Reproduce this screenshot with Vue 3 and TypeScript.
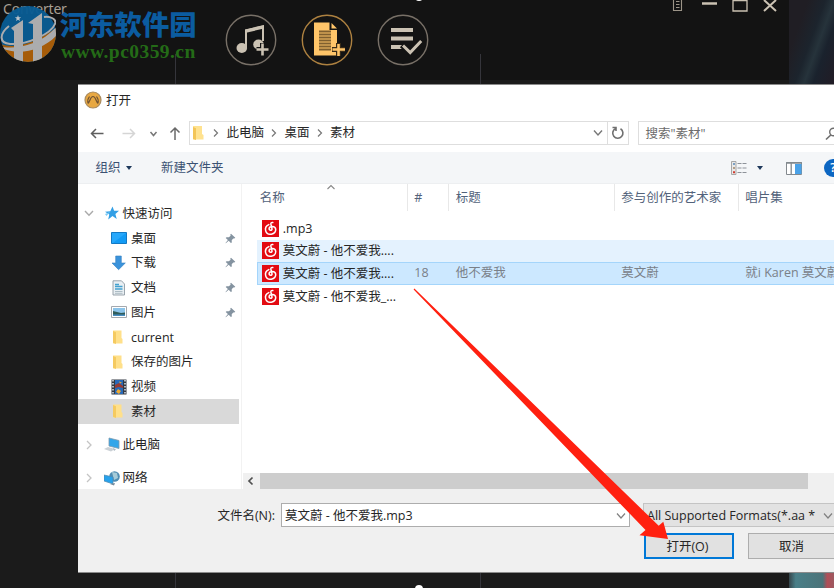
<script setup lang="ts">
interface Place { label: string; icon: string; pinned?: boolean; selected?: boolean }
interface Track { name: string; no?: string; title?: string; artist?: string; album?: string; state?: string }

const places: Place[] = [
  { label: '桌面', icon: 'desktop', pinned: true },
  { label: '下载', icon: 'download', pinned: true },
  { label: '文档', icon: 'doc', pinned: true },
  { label: '图片', icon: 'picture', pinned: true },
  { label: 'current', icon: 'folder' },
  { label: '保存的图片', icon: 'folder' },
  { label: '视频', icon: 'video' },
  { label: '素材', icon: 'folder', selected: true },
]
const tracks: Track[] = [
  { name: '.mp3' },
  { name: '莫文蔚 - 他不爱我....', state: 'hover' },
  { name: '莫文蔚 - 他不爱我....', no: '18', title: '他不爱我', artist: '莫文蔚', album: '就i Karen 莫文蔚', state: 'active' },
  { name: '莫文蔚 - 他不爱我_...' },
]
const crumbs: string[] = ['此电脑', '桌面', '素材']
</script>

<template>
  <div class="screen">
    <header class="app-bar">
      <div class="app-name">Converter</div>
      <div class="tools">
        <svg class="tool" viewBox="0 0 52 52">
          <circle cx="26" cy="26" r="24.700" fill="none" stroke="#787067" stroke-width="1.400" />
          <path d="M21 34V16.500l17-4V27" fill="none" stroke="#cbc2b3" stroke-width="2" />
          <path d="M20 15.500l19-4.500v3.500l-19 4.500z" fill="#cbc2b3" />
          <ellipse cx="16.800" cy="34" rx="5.300" ry="5" fill="#cbc2b3" />
          <ellipse cx="33.500" cy="30.500" rx="5.300" ry="5" fill="#cbc2b3" />
          <path d="M37.500 29v13M31.500 35.500h12.500" stroke="#131313" stroke-width="5" />
          <path d="M37.500 29.500v12M31.500 35.500h12" stroke="#cbc2b3" stroke-width="2.600" />
        </svg>
        <svg class="tool" viewBox="0 0 52 52">
          <circle cx="26" cy="26" r="24.700" fill="none" stroke="#ad8140" stroke-width="1.400" />
          <path d="M13 8.500h15.500v7.500h7.500v25.500H13z" fill="#ffc569" />
          <path d="M30.500 9v5.500H36z" fill="#ffc569" />
          <path d="M18 17.500h12M18 20.500h12M18 23.500h12M18 26.500h12M18 29.500h12M18 32.500h12M18 35.500h12" stroke="#80602f" stroke-width="1.800" />
          <path d="M37.500 29v13M31 35.500h13" stroke="#382b17" stroke-width="5" />
          <path d="M37.500 30v12M31.500 35.500h12.500" stroke="#ffc569" stroke-width="2.600" />
        </svg>
        <svg class="tool" viewBox="0 0 52 52">
          <circle cx="26" cy="26" r="24.700" fill="none" stroke="#787067" stroke-width="1.400" />
          <path d="M14 16h22M14 24.500h22M14 33h12" stroke="#cbc2b3" stroke-width="4.200" />
          <path d="M25 31l8 7.500 11.500-12" fill="none" stroke="#131313" stroke-width="6" />
          <path d="M26 31.500l7.200 7 11-11.500" fill="none" stroke="#cbc2b3" stroke-width="3" />
        </svg>
      </div>
      <svg class="win-controls" viewBox="0 0 114 14">
        <path d="M2.500 0v10.500h8V0M5 1.500h3.500M5 4.500h3.500M5 7.500h3.500" fill="none" stroke="#9c9488" stroke-width="1.100" />
        <path d="M31 3.500h15" stroke="#cbc2b3" stroke-width="2.500" />
        <path d="M62 .5h14v10.500H62zM62 0h14" fill="none" stroke="#cbc2b3" stroke-width="1.300" />
        <path d="M93 0l12 11M105 0L93 11" stroke="#cbc2b3" stroke-width="2" />
      </svg>
    </header>
    <div class="guide guide-left"></div>
    <div class="guide guide-right"></div>
    <div class="wall wall-top"></div>
    <div class="wall wall-bottom"></div>

    <div class="watermark">
      <svg class="mark" viewBox="0 0 56 56">
        <defs><clipPath id="disc"><circle cx="28" cy="28" r="28" /></clipPath></defs>
        <g clip-path="url(#disc)">
          <rect width="56" height="56" fill="#095c94" />
          <path d="M0 38C18 44 38 35 56 22v34H0z" fill="#ad6009" />
          <path d="M11 22l12-8v42h-9V25zM28 17l14-10v49h-9V18z" fill="#b2b3b5" />
          <path d="M-2 38C3 45 38 43 57 20v9C42 45 18 50 2 42z" fill="#b2b3b5" />
        </g>
        <path d="M9 20C-1 28-1 37 10 38c17 1 41-10 45-20 2-5-5-8-11-7" fill="none" stroke="#b2b3b5" stroke-width="2" />
        <path d="M18 9l.8 2.200h2.300l-1.800 1.500.7 2.300-2-1.300-2 1.300.7-2.300-1.800-1.500h2.300z" fill="#c4cbd2" />
      </svg>
      <div class="mark-text">
        <div class="mark-cn">河东软件园</div>
        <div class="mark-url">www.pc0359.cn</div>
      </div>
    </div>

    <section class="dialog">
      <div class="title">
        <svg class="logo" viewBox="0 0 18 18">
          <circle cx="9" cy="9" r="8" fill="#e8a842" stroke="#a98b60" stroke-width="1.200" />
          <path d="M3.800 12.500C6 11.500 6 5.500 9 5.500s3 6 5.200 7M5.500 5.500C3.500 8 3.500 10 4 12M12.500 5.500c2 2.500 2 4.500 1.500 6.500" fill="none" stroke="#705333" stroke-width="1.200" />
        </svg>
        <span>打开</span>
      </div>

      <div class="nav">
        <svg class="arrows" viewBox="0 0 102 24">
          <g fill="none" stroke-width="1.500">
            <path d="M13.500 12.500H1.500M6 8l-4.500 4.500L6 17" stroke="#5f5f5f" />
            <path d="M32.500 12.500H44.500M40 8l4.500 4.500L40 17" stroke="#d5d5d5" />
            <path d="M60.500 11l3 3.500 3-3.500" stroke="#777" />
            <path d="M85 19V7M80.500 11.500L85 7l4.500 4.500" stroke="#6a6a6a" />
          </g>
        </svg>
        <div class="address">
          <svg class="folder small" viewBox="0 0 12 14"><path d="M1 0h9v8l1.500 1v4.500H1z" fill="#ffe28f" /><path d="M1 1l3 1.200V14l-3-1z" fill="#f3c557" /></svg>
          <template v-for="c in crumbs" :key="c">
            <svg class="sep" viewBox="0 0 8 10"><path d="M2 1.500L5.500 5 2 8.500" fill="none" stroke="#777" stroke-width="1.200" /></svg>
            <span class="crumb">{{ c }}</span>
          </template>
          <svg class="chev" viewBox="0 0 10 8"><path d="M1 1.500L5 6l4-4.500" fill="none" stroke="#777" stroke-width="1.400" /></svg>
          <div class="refresh">
            <svg viewBox="0 0 14 14"><path d="M9.500 2.800A5.100 5.100 0 1 1 4.500 2.600M1.500 1.500H5V5" fill="none" stroke="#707070" stroke-width="1.600" /></svg>
          </div>
        </div>
        <div class="search">
          <span>搜索"素材"</span>
          <svg viewBox="0 0 14 14"><circle cx="8.500" cy="5" r="3.800" fill="none" stroke="#6e6e6e" stroke-width="1.400" /><path d="M5.800 8L1 12.500" stroke="#6e6e6e" stroke-width="1.600" /></svg>
        </div>
      </div>

      <div class="toolbar">
        <span>组织</span><i class="caret"></i>
        <span class="new-folder">新建文件夹</span>
        <div class="view-icons">
          <svg class="view-list" viewBox="0 0 16 14">
            <path d="M.5.500h4.500v13H.5z" fill="#e9e9e9" stroke="#a7a7a7" />
            <path d="M2 3h2" stroke="#5689b8" stroke-width="1.500" /><path d="M2 7h2" stroke="#a08364" stroke-width="1.500" /><path d="M2 11.300h2" stroke="#d23b2f" stroke-width="2" />
            <path d="M6.500 2.500h4M11.500 2.500h4M6.500 7h4M11.500 7h4M6.500 11.500h4M11.500 11.500h4" stroke="#8d9299" stroke-width="1.200" />
          </svg>
          <i class="caret view-caret"></i>
          <svg class="view-pane" viewBox="0 0 16 13"><path d="M.5.500h15v12H.5z" fill="#fff" stroke="#83898e" /><path d="M0 1h16M5.200 1v11" stroke="#83898e" stroke-width="1.300" /><path d="M9 2h6.500v10H9z" fill="#4aa2e8" /></svg>
          <span class="help">?</span>
        </div>
      </div>

      <div class="content">
        <aside class="sidebar">
          <div class="place root">
            <svg class="twist" viewBox="0 0 10 10"><path d="M1 3l4 4.200L9 3" fill="none" stroke="#aaa" stroke-width="1.400" /></svg>
            <svg class="root-icon" viewBox="0 0 16 16"><path d="M8.500 1.500l1.600 4.300h4.900l-3.600 3.100 1.300 5.100-4.200-2.900-4.300 3.400 1.100-5L1 6.800l5.300-.5z" fill="#329fe5" /><path d="M1 9l5-2-3.500 4z" fill="#80ccf5" /></svg>
            <span>快速访问</span>
          </div>
          <div v-for="p in places" :key="p.label" class="place child" :class="{ selected: p.selected }">
            <span class="icon-slot">
              <svg v-if="p.icon === 'desktop'" width="16" height="14" viewBox="0 0 16 14"><path d="M.5 1.500h15v11H.5z" fill="#139bf5" stroke="#1379c4" /><path d="M1 2h14L2 12H1z" fill="#35b1ff" opacity=".6" /></svg>
              <svg v-else-if="p.icon === 'download'" width="16" height="16" viewBox="0 0 16 16"><path d="M4.700 1h5.600v7h4L7.600 14.700 1 8h3.700z" fill="#3b93db" stroke="#347fc1" stroke-width=".6" /></svg>
              <svg v-else-if="p.icon === 'doc'" width="16" height="16" viewBox="0 0 16 16"><path d="M2 .8h8.500L13.500 4v11H2z" fill="#e9eff3" stroke="#909ba4" stroke-width=".9" /><path d="M4 4.500h4M4 6.500h7.500M4 9h7.500" stroke="#43a1cf" stroke-width="1.500" /><path d="M4 11.500h7.500M4 13.300h7.500" stroke="#9dafb8" stroke-width=".8" /></svg>
              <svg v-else-if="p.icon === 'picture'" width="16" height="14" viewBox="0 0 16 14"><path d="M.5 1.500h15v11H.5z" fill="#fff" stroke="#a4a9af" /><path d="M2 3h12v8H2z" fill="#8cc4ea" /><path d="M2 6l4 1 4 1 4-.5V11H2z" fill="#315d5b" /><path d="M2 9.500h12V11H2z" fill="#478dc1" /></svg>
              <svg v-else-if="p.icon === 'video'" width="16" height="16" viewBox="0 0 16 16"><path d="M.5.500h15v15H.5z" fill="#333943" /><path d="M4 1h8v14H4z" fill="#286ab9" /><path d="M4 6l4-2 4 3v2l-4-1-4 1z" fill="#9a3b32" /><path d="M8 2.500l3 1-2 1zM7 10l3 2-2 3-3-2z" fill="#f0aa31" /><path d="M2 1v14M14 1v14" stroke="#d3d9df" stroke-width="1.600" stroke-dasharray="1.500 1.500" /></svg>
              <svg v-else width="16" height="16" viewBox="0 0 16 16"><path d="M2 1.500h8.500V9l1 1v4.500H2z" fill="#ffe08a" /><path d="M2 2l3 1.200V15l-3-1.200z" fill="#f5ca60" /></svg>
            </span>
            <span>{{ p.label }}</span>
            <svg v-if="p.pinned" class="pin" viewBox="0 0 11 11"><path d="M6 .8l4.300 4-1 .8-1-.2-1.600 1.800.1 2.300-.9.500L3.700 7.800.8 10.300.5 10l2.400-3L.7 5l.8-.8 2.400.1 1.700-1.600-.3-1.200z" fill="#8493a0" /></svg>
          </div>
          <div class="place root gap">
            <svg class="twist" viewBox="0 0 10 10"><path d="M3 1l4 4-4 4" fill="none" stroke="#c4c4c4" stroke-width="1.300" /></svg>
            <svg class="root-icon" viewBox="0 0 16 16"><path d="M5 1l10 2.500v8L5 9z" fill="#32a6ea" stroke="#7e9bad" stroke-width=".8" /><path d="M0 12l4-2 7 2-4 2.500z" fill="#cbd1d6" /><path d="M9 11l3 1.500-2 1.500" fill="#aab7c0" /></svg>
            <span>此电脑</span>
          </div>
          <div class="place root gap">
            <svg class="twist" viewBox="0 0 10 10"><path d="M3 1l4 4-4 4" fill="none" stroke="#c4c4c4" stroke-width="1.300" /></svg>
            <svg class="root-icon" viewBox="0 0 16 16"><circle cx="10.500" cy="6.500" r="5.300" fill="#508db2" /><path d="M8 2l5 1 1 5-4 2z" fill="#a6cbd8" /><path d="M0 5l9 2v7L0 11z" fill="#27a2ec" stroke="#5188ac" stroke-width=".7" /><path d="M6 14l5-1-1 2.500z" fill="#74899a" /></svg>
            <span>网络</span>
          </div>
        </aside>

        <main class="files">
          <div class="cols head">
            <span class="c-name">名称</span><span>#</span><span>标题</span><span>参与创作的艺术家</span><span>唱片集</span>
            <svg class="sort" viewBox="0 0 10 6"><path d="M1.500 5L5 1.500 8.500 5" fill="none" stroke="#888" stroke-width="1.100" /></svg>
          </div>
          <div v-for="(t, i) in tracks" :key="i" class="cols track" :class="t.state">
            <span class="c-name">
              <svg class="disc" viewBox="0 0 17 17"><rect width="17" height="17" fill="#e30b12" /><path d="M10.800 2.500C9.500 2.200 8.600 3 8.900 4.300l1.100 4.600c.3 1.500-2.900 2-2.900-.1 0-3 6.300-3.500 6.600.5.300 5.600-8.600 6.900-10 1.600-.8-3 1-5.400 3.100-6.300" fill="none" stroke="#fff" stroke-width="1.500" stroke-linecap="round" /></svg>
              <span>{{ t.name }}</span>
            </span>
            <span>{{ t.no }}</span><span>{{ t.title }}</span><span>{{ t.artist }}</span><span>{{ t.album }}</span>
          </div>
          <div class="scroll">
            <svg viewBox="0 0 17 16"><path d="M9.500 4.500L6 8l3.500 3.500" fill="none" stroke="#505050" stroke-width="1.700" /></svg>
            <div class="thumb"></div>
          </div>
        </main>
      </div>

      <footer class="footer">
        <div class="line">
          <label>文件名(N):</label>
          <div class="field"><span>莫文蔚 - 他不爱我.mp3</span><svg class="chev" viewBox="0 0 10 8"><path d="M1 1.500L5 6l4-4.500" fill="none" stroke="#808080" stroke-width="1.200" /></svg></div>
          <div class="filter"><span>All Supported Formats(*.aa *</span><svg class="chev" viewBox="0 0 10 8"><path d="M1 1.500L5 6l4-4.500" fill="none" stroke="#808080" stroke-width="1.200" /></svg></div>
        </div>
        <div class="line buttons">
          <button class="btn primary">打开(O)</button>
          <button class="btn">取消</button>
        </div>
      </footer>
    </section>

    <svg class="pointer" viewBox="0 0 834 588"><path d="M413.600 289.400l.8-1 244.300 237.300 4.600-4 4.700 17.300-28.500-3.700 6-5.300z" fill="#ff2010" /></svg>
    <i class="handle handle-top"></i>
    <i class="handle handle-bottom"></i>
  </div>
</template>

<style>
body { margin: 0; overflow: hidden; background: #1b1b1b; }
</style>

<style scoped>
* { box-sizing: border-box; }
svg { display: block; flex: none; }
.screen { position: relative; width: 834px; height: 588px; overflow: hidden; background: #1b1b1b; font: 12.5px/18px "Open Sans", "Noto Sans CJK SC", sans-serif; color: #262626; white-space: nowrap; }
.app-bar { display: flex; height: 80px; width: 789px; background: #131313; }
.app-name { width: 224.500px; padding-left: 3px; font: 14px/17px "Noto Sans", sans-serif; color: #a79f94; letter-spacing: -.2px; }
.tools { display: flex; gap: 24px; padding-top: 13.500px; }
.tool { width: 52px; height: 52px; }
.win-controls { width: 114px; height: 14px; margin-left: auto; margin-right: 4px; }
.guide { position: absolute; top: 54px; width: 1px; height: 534px; background: #35353b; }
.guide-left { left: 175px; }
.guide-right { left: 480px; }
.wall { position: absolute; left: 789px; width: 45px; }
.wall-top { top: 0; height: 84px; background: linear-gradient(110deg, #201e24 0 25%, #1c242d 48%, #26333b 60%, #1a222d 72%, #211c25 100%); }
.wall-bottom { top: 572px; height: 16px; background: linear-gradient(90deg, #35454b, #497f88 15%, #4b7379 75%, #b14e57 85%, #9c5960); }
.watermark { position: absolute; left: 0; top: 6px; display: flex; gap: 4px; opacity: .96; }
.mark { width: 56px; height: 56px; }
.mark-text { padding-top: 2px; }
.mark-cn { font: 900 27.300px/30px "Noto Sans CJK SC", sans-serif; color: #0b5fa6; }
.mark-url { font: bold 19.500px/22px "Liberation Serif", serif; color: #256f18; letter-spacing: .45px; padding-left: 1px; margin-top: 3px; }

.dialog { position: absolute; left: 78px; top: 84px; width: 770px; height: 489px; display: flex; flex-direction: column; border: 1px solid #8b8b8b; border-left: 0; background: #fff; }
.title { display: flex; align-items: center; gap: 4px; height: 36px; padding: 0 0 6px 6px; }
.title span { padding-top: 1px; }
.logo { width: 18px; height: 18px; }
.nav { display: flex; height: 31px; }
.arrows { width: 102px; height: 24px; margin-left: 12px; margin-right: -3.500px; }
.address { display: flex; align-items: center; width: 440px; height: 24px; border: 1px solid #dedede; padding-left: 2.500px; }
.small { width: 12px; height: 14px; margin-right: 8px; }
.sep { width: 8px; height: 10px; }
.crumb { margin: 0 6px 0 6.500px; }
.address .chev { margin-left: auto; margin-right: 4px; }
.chev { width: 10px; height: 8px; }
.refresh { display: flex; align-items: center; justify-content: center; width: 21px; height: 22px; border-left: 1px solid #dedede; }
.refresh svg { width: 14px; height: 14px; }
.search { display: flex; align-items: center; justify-content: space-between; flex: 1; height: 24px; margin-left: 9px; padding: 1px 7px 0 7px; border: 1px solid #dedede; color: #6c6c6c; }
.search svg { width: 14px; height: 14px; }
.toolbar { display: flex; align-items: center; height: 32px; padding: 1px 0 0 17.500px; background: #f4f6f8; border-bottom: 1px solid #edeff1; color: #3b5273; }
.caret { width: 0; height: 0; border: 3.500px solid transparent; border-top: 4px solid #1e395b; border-bottom: 0; margin-left: 5px; }
.new-folder { margin-left: 29.500px; }
.view-icons { display: flex; align-items: center; margin-left: auto; padding-right: 5px; }
.view-list { width: 16px; height: 14px; }
.view-caret { margin-left: 10.500px; }
.view-pane { width: 16px; height: 13px; margin-left: 23px; }
.help { width: 18px; height: 18px; margin-left: 22px; border-radius: 50%; background: #0c66c2; color: #fff; font-weight: 600; line-height: 18px; text-align: center; }
.content { display: flex; flex: none; height: 305px; }
.sidebar { width: 164px; padding-top: 17px; border-right: 1px solid #f2f2f2; }
.place { display: flex; align-items: center; height: 24.750px; }
.place > span:not(.icon-slot) { padding-top: 1px; }
.place.root { padding-left: 6px; }
.place.gap { margin-top: 8.500px; }
.twist { width: 10px; height: 10px; margin-right: 9.500px; }
.root-icon { width: 16px; height: 16px; margin-right: 3px; }
.child { width: 161px; padding-left: 33px; }
.icon-slot { display: flex; align-items: center; width: 16px; height: 16px; margin-right: 4px; }
.selected { background: #d9d9d9; }
.pin { width: 11px; height: 11px; margin-left: auto; margin-right: 3px; }
.files { display: flex; flex-direction: column; width: 606px; }
.cols { display: grid; grid-template-columns: 151px 41.500px 165.500px 124px 1fr; margin-left: 15px; }
.cols > span { display: flex; align-items: center; padding-left: 6.500px; overflow: hidden; }
.head { position: relative; height: 27px; margin-bottom: 6.500px; color: #52627a; }
.head > span { border-right: 1px solid #e8e8e8; }
.head .c-name { padding-left: 3px; }
.sort { position: absolute; left: 69px; top: 0; width: 10px; height: 6px; }
.track { height: 22px; color: #7a8088; }
.track .c-name { padding-left: 5px; color: #262626; }
.c-name > span { padding-top: 1px; }
.disc { width: 17px; height: 17px; margin-right: 4px; }
.hover { background: #e4f2fe; }
.active { background: #cce8ff; box-shadow: inset 0 0 0 1px #a4d5fb; height: 23.500px; }
.scroll { display: flex; height: 16px; margin: auto 0 0 1px; background: #f0f0f0; }
.scroll svg { width: 17px; height: 16px; }
.thumb { width: 548px; background: #cdcdcd; }
.footer { flex: 1; padding-top: 14px; background: #f0f0f0; }
.line { display: flex; height: 24px; }
.line label { width: 203px; padding-right: 6px; line-height: 25px; text-align: right; }
.field, .filter { display: flex; align-items: center; justify-content: space-between; height: 24px; border: 1px solid #adadad; padding: 1px 3px 0 3px; }
.field { width: 349px; background: #fff; }
.filter { width: 204px; margin-left: 13px; padding: 1px 13px 0 3px; background: #e2e2e2; border-color: #c4c4c4; }
.buttons { height: 26px; margin: 6px 0 0 565.500px; gap: 14px; }
.btn { width: 90px; height: 26px; padding: 1px 2px 0 0; border: 1px solid #adadad; border-radius: 0; background: #e1e1e1; font: inherit; color: #262626; }
.primary { border: 2px solid #0078d7; }
.pointer { position: absolute; left: 0; top: 0; width: 834px; height: 588px; }
.handle { position: absolute; left: 415px; width: 8px; height: 8px; border-radius: 50%; background: #fff; }
.handle-top { top: -7px; }
.handle-bottom { top: 585px; }
</style>
